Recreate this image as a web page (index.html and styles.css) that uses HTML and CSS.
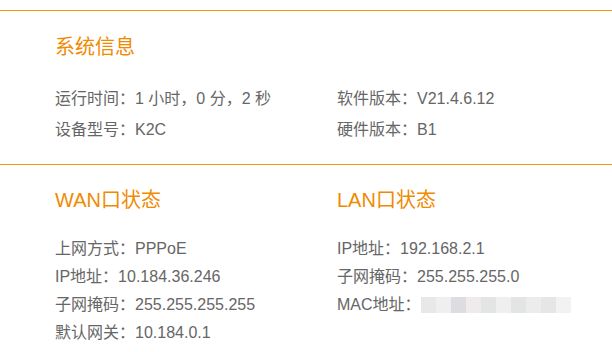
FILE: index.html
```html
<!DOCTYPE html>
<html lang="zh-CN">
<head>
    <meta charset="UTF-8">
    <meta name="viewport" content="width=device-width, initial-scale=1.0">
    <title>状态</title>
    <link rel="stylesheet" href="styles.css">
</head>
<body>

    <div class="page">
        <div class="section sys">
            <h3 class="title">系统信息</h3>
            <div class="grid">
                <p class="row">运行时间：1 小时，0 分，2 秒</p>
                <p class="row">软件版本：V21.4.6.12</p>
                <p class="row">设备型号：K2C</p>
                <p class="row">硬件版本：B1</p>
            </div>
        </div>

        <div class="section ports">
            <div class="col">
                <h3 class="title">WAN口状态</h3>
                <p class="row">上网方式：PPPoE</p>
                <p class="row">IP地址：10.184.36.246</p>
                <p class="row">子网掩码：255.255.255.255</p>
                <p class="row">默认网关：10.184.0.1</p>
            </div>
            <div class="col">
                <h3 class="title">LAN口状态</h3>
                <p class="row">IP地址：192.168.2.1</p>
                <p class="row">子网掩码：255.255.255.0</p>
                <p class="row">MAC地址：<span class="blur"><i></i><i></i><i></i><i></i><i></i><i></i><i></i><i></i><i></i><i></i></span></p>
            </div>
        </div>
    </div>

</body>
</html>
```

FILE: styles.css
```css
body {
    font-family: "Liberation Sans", "Noto Sans CJK SC", sans-serif;
    background-color: #fff;
    color: #666;
    margin: 0;
    padding: 0;
}

.page {
    padding-top: 10px;
}

.section {
    border-top: 1px solid #f39800;
    padding-left: 55px;
}

.title {
    margin: 0;
    font-size: 20px;
    font-weight: normal;
    line-height: 24px;
    color: #f08a00;
}

.row {
    margin: 0;
    font-size: 16px;
    white-space: nowrap;
}

/* system info block */
.sys {
    padding-top: 24px;
    padding-bottom: 19px;
}

.sys .grid {
    display: grid;
    grid-template-columns: 282px 1fr;
    margin-top: 24px;
}

.sys .row {
    line-height: 31px;
}

/* wan / lan block */
.ports {
    display: grid;
    grid-template-columns: 282px 1fr;
    padding-top: 23px;
}

.ports .title {
    margin-bottom: 23px;
}

.ports .row {
    line-height: 28px;
}

.blur {
    display: inline-flex;
    vertical-align: -3px;
    height: 16px;
}

.blur i {
    width: 15px;
    height: 16px;
    background: #e8e8e8;
}

.blur i:nth-child(2) { background: #f0efee; }
.blur i:nth-child(3) { background: #dcdde0; }
.blur i:nth-child(4) { background: #efebea; }
.blur i:nth-child(5) { background: #e3e4e4; }
.blur i:nth-child(6) { background: #efefef; }
.blur i:nth-child(7) { background: #e3e4e4; }
.blur i:nth-child(8) { background: #ececec; }
.blur i:nth-child(9) { background: #e6e6e6; }
.blur i:nth-child(10) { background: #f2f2f2; }
```
